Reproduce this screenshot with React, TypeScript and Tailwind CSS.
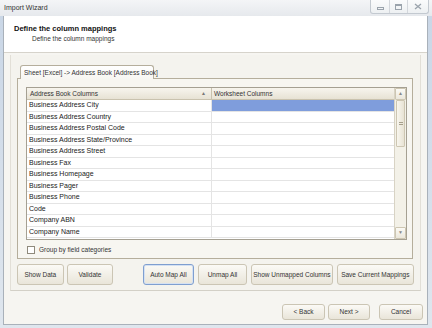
import React from "react";

const rows = [
  "Business Address City",
  "Business Address Country",
  "Business Address Postal Code",
  "Business Address State/Province",
  "Business Address Street",
  "Business Fax",
  "Business Homepage",
  "Business Pager",
  "Business Phone",
  "Code",
  "Company ABN",
  "Company Name",
];

function Btn({ label, w, focused }: { label: string; w: string; focused?: boolean }) {
  return (
    <button
      className={`${w} h-[21px] whitespace-nowrap rounded-[3px] border text-[6.5px] text-[#333] bg-gradient-to-b from-[#fbfaf6] to-[#e9e5d9] ${
        focused ? "border-[#7f9fd0] shadow-[inset_0_0_0_1px_#d5e1f2]" : "border-[#cbc5b4]"
      }`}
    >
      {label}
    </button>
  );
}

function SmallBtn({ label, w }: { label: string; w: string }) {
  return (
    <button className={`${w} h-[16px] whitespace-nowrap rounded-[3px] border border-[#cbc5b4] text-[6.5px] text-[#333] bg-gradient-to-b from-[#fbfaf6] to-[#e9e5d9]`}>
      {label}
    </button>
  );
}

export default function App() {
  return (
    <div className="w-[432px] h-[328px] overflow-hidden bg-gradient-to-b from-[#c9d6e6] to-[#dfe6ee] font-['Liberation_Sans',Arial,sans-serif] text-[#222]">
      {/* title bar */}
      <div className="h-[16px] flex items-center justify-between bg-gradient-to-b from-[#f4f5f7] to-[#e6e9ed] pl-[4px] pr-[3px]">
        <span className="text-[7px] text-[#333]">Import Wizard</span>
        <div className="flex h-[14px] self-start border border-t-0 border-[#c3c9d0] rounded-b-[3px] bg-gradient-to-b from-[#fafbfc] to-[#edf0f2]">
          <div className="w-[19px] flex items-center justify-center border-r border-[#d3d7dc]">
            <div className="w-[7px] h-[3px] border border-[#9aa3ac] mt-[3px]" />
          </div>
          <div className="w-[18px] flex items-center justify-center border-r border-[#d3d7dc]">
            <div className="w-[7px] h-[6px] border border-[#9aa3ac] border-t-2" />
          </div>
          <div className="w-[20px] flex items-center justify-center">
            <svg width="8" height="7" viewBox="0 0 8 7">
              <path d="M1 1 L7 6 M7 1 L1 6" stroke="#9aa3ac" strokeWidth="1.3" />
            </svg>
          </div>
        </div>
      </div>

      {/* window body */}
      <div className="ml-[3px] w-[425px] h-[309px] border border-t-0 border-[#a9b1ba] bg-[#f6f5f1] flex flex-col">
        {/* header */}
        <div className="h-[37px] bg-white border-b border-[#d6d3cb] pl-[10px] pt-[8px]">
          <div className="text-[7.5px] font-bold text-[#111] leading-[9px]">Define the column mappings</div>
          <div className="text-[6.5px] text-[#333] leading-[9px] pl-[18px] mt-[1px]">Define the column mappings</div>
        </div>

        {/* content */}
        <div className="h-[236px] bg-[#f4f3ee] border-b border-[#d3d0c7] mx-[6px] mt-[2px] border-x border-x-[#e2dfd7] px-[6px] pt-[10px] flex flex-col">
          {/* tab */}
          <div className="ml-[3px] w-[134px] h-[14px] -mb-px relative z-10 whitespace-nowrap border border-b-0 border-[#b5ae9c] rounded-t-[3px] bg-gradient-to-b from-white to-[#f7f6f2] text-[6.5px] text-[#333] px-[3px] flex items-center">
            Sheet [Excel] -&gt; Address Book [Address Book]
          </div>
          <div className="w-[396px] h-[181px] border border-[#b5ae9c] bg-[#f7f6f1] pl-[8px] pt-[8px]">
            {/* grid */}
            <div className="w-[381px] h-[153px] border border-[#a5a092] bg-white flex">
              <div className="w-[368px] flex flex-col">
                <div className="h-[12px] flex bg-gradient-to-b from-[#f7f5ee] to-[#e7e2d4] border-b border-[#c9c2ae] text-[6.5px] text-[#333]">
                  <div className="w-[185px] border-r border-[#c9c2ae] pl-[3px] flex items-center justify-between pr-[5px]">
                    <span>Address Book Columns</span>
                    <span className="text-[5px] text-[#777]">▲</span>
                  </div>
                  <div className="flex-1 pl-[2px] flex items-center">Worksheet Columns</div>
                </div>
                {rows.map((r, i) => (
                  <div key={r} className="h-[11.5px] flex border-b border-[#e4e4e4] text-[7px] text-[#222]">
                    <div className="w-[185px] border-r border-[#e4e4e4] pl-[2px] flex items-center whitespace-nowrap">{r}</div>
                    <div className={`flex-1 ${i === 0 ? "bg-[#7f9ddc]" : ""}`} />
                  </div>
                ))}
              </div>
              {/* scrollbar */}
              <div className="w-[12px] border-l border-[#d8d3c4] bg-[#f3f1e8] flex flex-col">
                <div className="h-[12px] border border-[#cdc6b2] rounded-[1px] bg-gradient-to-b from-[#fbfaf5] to-[#ebe7db] flex items-center justify-center text-[5px] text-[#888]">▲</div>
                <div className="h-[47px] mx-px border border-[#cdc6b2] rounded-[1px] bg-gradient-to-r from-[#f8f6ee] to-[#e8e3d4] flex items-center justify-center">
                  <div className="w-[4px] h-[3px] border-y border-[#a69f8b]" />
                </div>
                <div className="flex-1" />
                <div className="h-[12px] border border-[#cdc6b2] rounded-[1px] bg-gradient-to-b from-[#fbfaf5] to-[#ebe7db] flex items-center justify-center text-[5px] text-[#888]">▼</div>
              </div>
            </div>
            <div className="flex items-center mt-[5px] ml-[1px] gap-[4px]">
              <div className="w-[8px] h-[8px] border border-[#8f8a7c] bg-white" />
              <span className="text-[6.5px] text-[#333]">Group by field categories</span>
            </div>
          </div>

          {/* action buttons */}
          <div className="flex mt-[5px]">
            <Btn label="Show Data" w="w-[47px]" />
            <div className="w-[3px]" />
            <Btn label="Validate" w="w-[47px]" />
            <div className="w-[30px]" />
            <Btn label="Auto Map All" w="w-[51px]" focused />
            <div className="w-[4px]" />
            <Btn label="Unmap All" w="w-[50px]" />
            <div className="w-[4px]" />
            <Btn label="Show Unmapped Columns" w="w-[82px]" />
            <div className="w-[4px]" />
            <Btn label="Save Current Mappings" w="w-[78px]" />
          </div>
        </div>

        {/* footer */}
        <div className="flex-1 flex items-end justify-end pr-[4px] pb-[4px] gap-[3px]">
          <SmallBtn label="< Back" w="w-[43px]" />
          <SmallBtn label="Next >" w="w-[42px]" />
          <div className="w-[3px]" />
          <SmallBtn label="Cancel" w="w-[44px]" />
        </div>
      </div>
    </div>
  );
}
